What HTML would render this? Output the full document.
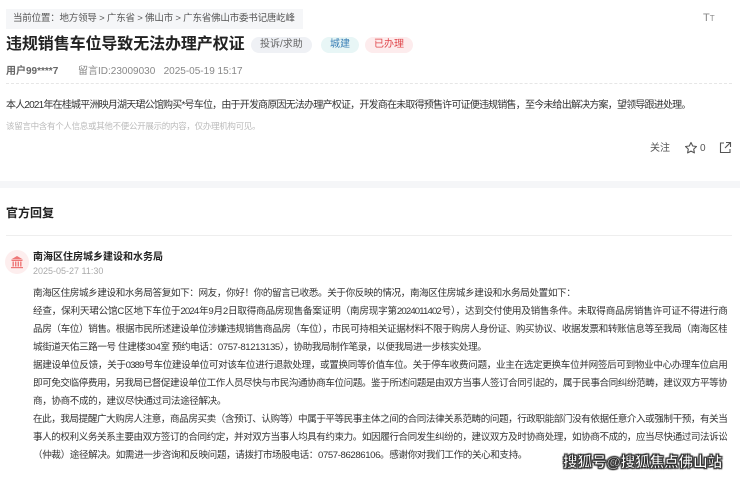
<!DOCTYPE html>
<html><head><meta charset="utf-8"><style>
*{margin:0;padding:0;box-sizing:border-box}
body{width:740px;height:480px;overflow:hidden;background:#fff;font-family:"Liberation Sans","Noto Sans CJK SC",sans-serif;color:#333;position:relative}
.a{position:absolute;white-space:nowrap}
.crumb{left:6px;top:9px;width:297px;height:20px;background:#f5f6f8;font-size:9.5px;color:#555;line-height:20px;padding-left:7px;letter-spacing:-0.2px}
.title{left:6px;top:34px;font-size:16px;font-weight:bold;color:#222;line-height:22px;letter-spacing:-0.1px}
.tag{top:37px;height:16px;line-height:16px;font-size:10px;border-radius:8px;padding:0 9px}
.p{width:694px;font-size:9.6px;line-height:18px;color:#333;text-align:justify;text-align-last:justify;white-space:nowrap;overflow:hidden;letter-spacing:-0.85px}
.p.e{text-align-last:left;letter-spacing:-0.4px}
</style></head><body>
<div class="a crumb">当前位置：地方领导 &gt; 广东省 &gt; 佛山市 &gt; 广东省佛山市委书记唐屹峰</div>
<div class="a" style="left:703px;top:12px;font-size:11px;color:#888">T<span style="font-size:8px">T</span></div>
<div class="a title">违规销售车位导致无法办理产权证</div>
<div class="a tag" style="left:251px;background:#eff1f5;color:#666">投诉/求助</div>
<div class="a tag" style="left:321px;background:#e8f6f6;color:#3a7fb5">城建</div>
<div class="a tag" style="left:365px;background:#fdeced;color:#e0474c">已办理</div>
<div class="a" style="left:6px;top:65px;font-size:10px;line-height:14px;color:#666;font-weight:bold">用户99****7</div>
<div class="a" style="left:78px;top:65px;font-size:10px;line-height:14px;color:#888">留言ID:23009030 &nbsp;&nbsp;2025-05-19 15:17</div>
<div class="a" style="left:6px;top:83px;width:726px;border-top:1px dashed #e6e6e6"></div>
<div class="a" style="left:6px;top:99px;font-size:10px;line-height:14px;color:#333;letter-spacing:-0.8px">本人2021年在桂城平洲映月湖天珺公馆购买*号车位，由于开发商原因无法办理产权证，开发商在未取得预售许可证便违规销售，至今未给出解决方案，望领导跟进处理。</div>
<div class="a" style="left:6px;top:120px;font-size:8.5px;line-height:12px;color:#bbb;letter-spacing:-0.3px">该留言中含有个人信息或其他不便公开展示的内容，仅办理机构可见。</div>
<div class="a" style="left:650px;top:142px;font-size:10px;line-height:14px;color:#555">关注</div>
<svg class="a" style="left:684px;top:141px" width="14" height="14" viewBox="0 0 14 14"><path d="M7 1.5l1.7 3.5 3.8.5-2.8 2.6.7 3.8L7 10.1 3.6 11.9l.7-3.8L1.5 5.5l3.8-.5z" fill="none" stroke="#555" stroke-width="1.1" stroke-linejoin="round"/></svg>
<div class="a" style="left:700px;top:142px;font-size:10px;line-height:14px;color:#555">0</div>
<svg class="a" style="left:719px;top:141px" width="13" height="13" viewBox="0 0 13 13"><path d="M5 2H1.5v9.5h9.5V8M7 1.5h4.5V6M11.3 1.7L6 7" fill="none" stroke="#555" stroke-width="1.1"/></svg>
<div class="a" style="left:0;top:181px;width:740px;height:7px;background:#f5f6f8"></div>
<div class="a" style="left:6px;top:205px;font-size:12px;font-weight:bold;line-height:16px;color:#222">官方回复</div>
<div class="a" style="left:6px;top:235px;width:726px;border-top:1px solid #eee"></div>
<div class="a" style="left:5px;top:250px;width:24px;height:24px;border-radius:50%;background:#fdeeee"></div>
<svg class="a" style="left:10px;top:255px" width="14" height="14" viewBox="0 0 14 14" fill="#e77"><path d="M7 1L1 4.5h12z"/><rect x="1.5" y="5" width="11" height="1"/><rect x="2.5" y="6.5" width="1.4" height="5"/><rect x="5" y="6.5" width="1.4" height="5"/><rect x="7.6" y="6.5" width="1.4" height="5"/><rect x="10.1" y="6.5" width="1.4" height="5"/><rect x="1" y="12" width="12" height="1.2"/></svg>
<div class="a" style="left:33px;top:251px;font-size:10px;font-weight:bold;line-height:14px;color:#222">南海区住房城乡建设和水务局</div>
<div class="a" style="left:33px;top:265px;font-size:9px;line-height:13px;color:#aaa">2025-05-27 11:30</div>
<div class="a" style="left:33px;top:285px">
<div class="p e">南海区住房城乡建设和水务局答复如下：网友，你好！你的留言已收悉。关于你反映的情况，南海区住房城乡建设和水务局处置如下：</div>
<div class="p">经查，保利天珺公馆C区地下车位于2024年9月2日取得商品房现售备案证明（南房现字第2024011402号），达到交付使用及销售条件。未取得商品房销售许可证不得进行商</div>
<div class="p">品房（车位）销售。根据市民所述建设单位涉嫌违规销售商品房（车位），市民可持相关证据材料不限于购房人身份证、购买协议、收据发票和转账信息等至我局（南海区桂</div>
<div class="p e">城街道天佑三路一号 住建楼304室 预约电话：0757-81213135），协助我局制作笔录，以便我局进一步核实处理。</div>
<div class="p">据建设单位反馈，关于0389号车位建设单位可对该车位进行退款处理，或置换同等价值车位。关于停车收费问题，业主在选定更换车位并网签后可到物业中心办理车位启用</div>
<div class="p">即可免交临停费用，另我局已督促建设单位工作人员尽快与市民沟通协商车位问题。鉴于所述问题是由双方当事人签订合同引起的，属于民事合同纠纷范畴，建议双方平等协</div>
<div class="p e">商，协商不成的，建议尽快通过司法途径解决。</div>
<div class="p">在此，我局提醒广大购房人注意，商品房买卖（含预订、认购等）中属于平等民事主体之间的合同法律关系范畴的问题，行政职能部门没有依据任意介入或强制干预，有关当</div>
<div class="p">事人的权利义务关系主要由双方签订的合同约定，并对双方当事人均具有约束力。如因履行合同发生纠纷的，建议双方及时协商处理，如协商不成的，应当尽快通过司法诉讼</div>
<div class="p e">（仲裁）途径解决。如需进一步咨询和反映问题，请拨打市场股电话：0757-86286106。感谢你对我们工作的关心和支持。</div>
</div>
<div class="a" style="left:563px;top:453px;font-size:14.5px;font-weight:bold;color:#fff;line-height:20px;-webkit-text-stroke:0.5px #222;text-shadow:1px 1px 1px #333,-1px -1px 1px #333,1px -1px 1px #333,-1px 1px 1px #333">搜狐号@搜狐焦点佛山站</div>
</body></html>
